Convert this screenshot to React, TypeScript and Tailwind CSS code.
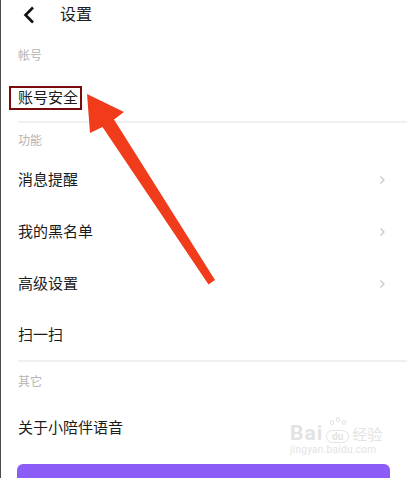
import React from "react";

const ChevronRight = () => (
  <svg width="7" height="10" viewBox="0 0 7 10" fill="none">
    <path d="M1.5 1.5 L5 5 L1.5 8.5" stroke="#c6c6c6" strokeWidth="1.2" />
  </svg>
);

function Row({ label, arrow = true, h = "h-[52px]" }: { label: string; arrow?: boolean; h?: string }) {
  return (
    <div className={`flex items-center justify-between pl-[17px] pr-[21px] ${h}`}>
      <span className="text-[15px] leading-[20px] text-[#1b1b1b]">{label}</span>
      {arrow && <ChevronRight />}
    </div>
  );
}

export default function App() {
  return (
    <div className="relative h-[478px] w-[407px] overflow-hidden border-l border-[#4b4b4b] bg-white font-['Roboto','Noto_Sans_CJK_SC',sans-serif]">
      {/* 顶栏 */}
      <div className="flex h-[30px] items-center">
        <svg className="ml-[22px]" width="12" height="18" viewBox="0 0 12 18" fill="none">
          <path d="M10 1.5 L2.5 9 L10 16.5" stroke="#111" strokeWidth="2.6" />
        </svg>
        <span className="ml-[25px] text-[16px] leading-[20px] text-[#1b1b1b]">设置</span>
      </div>

      <div className="mt-[20px] pl-[17px] text-[12px] leading-[12px] text-[#b4b4b4]">帐号</div>

      <div className="mt-[24px] pl-[8px]">
        <span className="inline-block border-2 border-[#7a0b0b] pl-[7px] pr-[2px] text-[15px] leading-[20px] text-[#1b1b1b]">
          账号安全
        </span>
      </div>

      <div className="ml-[17px] mt-[11px] h-[2px] bg-[#f0f0f0]" />

      <div className="mt-[12px] pl-[17px] text-[12px] leading-[12px] text-[#b4b4b4]">功能</div>

      <div className="mt-[7px]">
        <Row label="消息提醒" />
        <Row label="我的黑名单" />
        <Row label="高级设置" />
        <Row label="扫一扫" arrow={false} h="h-[50px]" />
      </div>

      <div className="ml-[17px] h-[2px] bg-[#f0f0f0]" />

      <div className="mt-[14px] pl-[17px] text-[12px] leading-[12px] text-[#b4b4b4]">其它</div>

      <div className="mt-[30px] pl-[17px] text-[15px] leading-[20px] text-[#1b1b1b]">关于小陪伴语音</div>

      <div className="ml-[16px] mt-[26px] h-[40px] w-[373px] rounded-t-[6px] bg-[#8b5cf6]" />

      {/* 水印 */}
      <div className="absolute left-[289px] top-[423px] flex flex-col items-start leading-none text-[#e3e3e3]">
        <div className="flex items-end gap-[3px]">
          <span className="text-[21px] font-bold leading-[20px] tracking-[1px]">Bai</span>
          <span className="relative flex h-[13px] w-[23px] items-center justify-center rounded-full border border-[#e3e3e3] text-[10px] font-bold">
            du
            <span className="absolute -top-[11px] left-[3px] h-[5px] w-[4px] rounded-full border border-[#e3e3e3]" />
            <span className="absolute -top-[14px] left-[9px] h-[5px] w-[4px] rounded-full border border-[#e3e3e3]" />
            <span className="absolute -top-[11px] left-[15px] h-[5px] w-[4px] rounded-full border border-[#e3e3e3]" />
          </span>
          <span className="text-[15px] leading-[16px]">经验</span>
        </div>
        <span className="mt-[2px] text-[10px] tracking-[0.3px]">jingyan.baidu.com</span>
      </div>

      {/* 红色箭头 */}
      <svg className="pointer-events-none absolute left-0 top-0" width="407" height="478">
        <polygon
          points="86,94 123,112 113,119.5 214,280 207.5,284.5 101.5,127 89,133"
          fill="#f13c1c"
        />
      </svg>
    </div>
  );
}
